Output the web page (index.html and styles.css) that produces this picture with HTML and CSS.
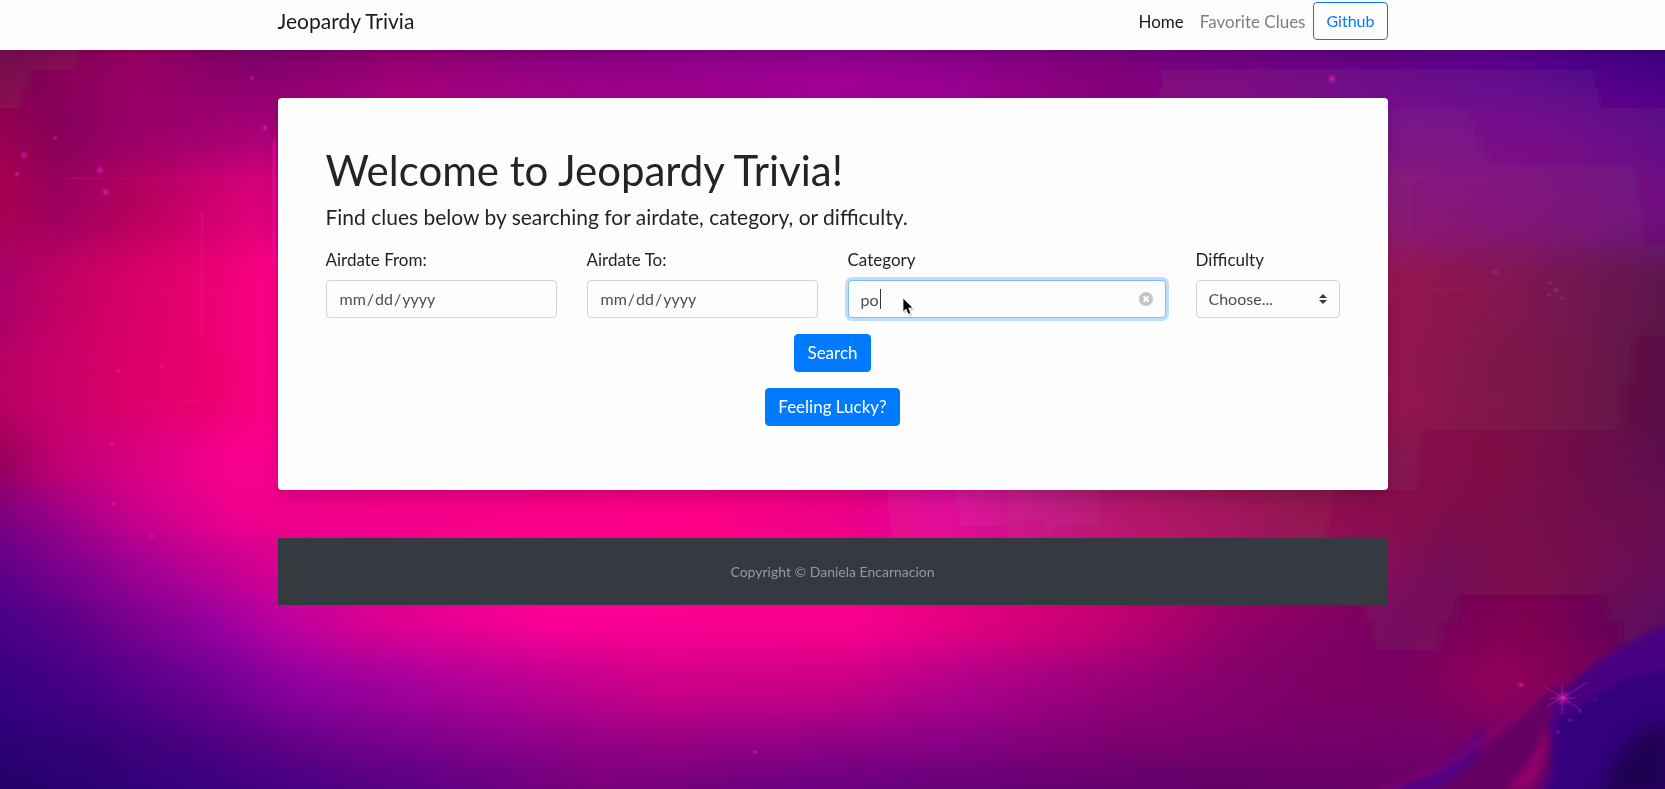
FILE: index.html
```html
<!DOCTYPE html>
<html lang="en">
<head>
<meta charset="utf-8">
<meta name="viewport" content="width=device-width, initial-scale=1">
<title>Jeopardy Trivia</title>
<link rel="stylesheet" href="styles.css">
</head>
<body>
<svg class="backdrop" viewBox="0 50 1665 739" preserveAspectRatio="none" aria-hidden="true">
  <defs>
    <linearGradient id="r1"><stop offset="0" stop-color="#72104a"/><stop offset=".08" stop-color="#960062"/><stop offset=".15" stop-color="#780068"/><stop offset=".24" stop-color="#88006a"/><stop offset=".33" stop-color="#80007c"/><stop offset=".5" stop-color="#85008a"/><stop offset=".63" stop-color="#78007c"/><stop offset=".81" stop-color="#5c0080"/><stop offset=".91" stop-color="#550088"/><stop offset="1" stop-color="#380080"/></linearGradient>
    <linearGradient id="r2"><stop offset="0" stop-color="#7c0850"/><stop offset=".08" stop-color="#980064"/><stop offset=".16" stop-color="#8c0070"/><stop offset=".24" stop-color="#a8007c"/><stop offset=".36" stop-color="#a0008c"/><stop offset=".5" stop-color="#ac009a"/><stop offset=".58" stop-color="#a00094"/><stop offset=".66" stop-color="#8a0074"/><stop offset=".75" stop-color="#801085"/><stop offset=".9" stop-color="#641090"/><stop offset="1" stop-color="#4c0088"/></linearGradient>
    <linearGradient id="r3"><stop offset="0" stop-color="#980050"/><stop offset=".035" stop-color="#850058"/><stop offset=".08" stop-color="#980068"/><stop offset=".16" stop-color="#a80078"/><stop offset=".83" stop-color="#7c1488"/><stop offset=".92" stop-color="#78108a"/><stop offset="1" stop-color="#600c88"/></linearGradient>
    <linearGradient id="r4"><stop offset="0" stop-color="#a80050"/><stop offset=".035" stop-color="#9a0060"/><stop offset=".08" stop-color="#b4005c"/><stop offset=".15" stop-color="#dc0078"/><stop offset=".83" stop-color="#8a1a78"/><stop offset=".92" stop-color="#80187c"/><stop offset="1" stop-color="#701080"/></linearGradient>
    <linearGradient id="r5"><stop offset="0" stop-color="#a80068"/><stop offset=".035" stop-color="#c00064"/><stop offset=".08" stop-color="#d80068"/><stop offset=".12" stop-color="#e80070"/><stop offset=".16" stop-color="#fc0084"/><stop offset=".84" stop-color="#941450"/><stop offset=".9" stop-color="#841450"/><stop offset=".95" stop-color="#701450"/><stop offset="1" stop-color="#5c144c"/></linearGradient>
    <linearGradient id="r6"><stop offset="0" stop-color="#b80064"/><stop offset=".035" stop-color="#c8006a"/><stop offset=".08" stop-color="#dc0068"/><stop offset=".12" stop-color="#e8006c"/><stop offset=".16" stop-color="#fc0084"/><stop offset=".84" stop-color="#941450"/><stop offset=".89" stop-color="#801448"/><stop offset=".94" stop-color="#741448"/><stop offset="1" stop-color="#581044"/></linearGradient>
    <linearGradient id="r7"><stop offset="0" stop-color="#980058"/><stop offset=".035" stop-color="#c00070"/><stop offset=".08" stop-color="#d80080"/><stop offset=".14" stop-color="#f80090"/><stop offset=".5" stop-color="#f80080"/><stop offset=".57" stop-color="#d81898"/><stop offset=".67" stop-color="#a81460"/><stop offset=".84" stop-color="#841450"/><stop offset=".9" stop-color="#800844"/><stop offset="1" stop-color="#5c1050"/></linearGradient>
    <linearGradient id="r8"><stop offset="0" stop-color="#7c0080"/><stop offset=".035" stop-color="#9a0088"/><stop offset=".08" stop-color="#c8008c"/><stop offset=".14" stop-color="#f0008c"/><stop offset=".42" stop-color="#fc0084"/><stop offset=".51" stop-color="#e80088"/><stop offset=".57" stop-color="#e010a0"/><stop offset=".63" stop-color="#c02088"/><stop offset=".69" stop-color="#b01468"/><stop offset=".78" stop-color="#941450"/><stop offset=".87" stop-color="#800848"/><stop offset="1" stop-color="#680850"/></linearGradient>
    <linearGradient id="r9"><stop offset="0" stop-color="#600088"/><stop offset=".035" stop-color="#78008c"/><stop offset=".09" stop-color="#a40094"/><stop offset=".16" stop-color="#d40090"/><stop offset=".3" stop-color="#fc0090"/><stop offset=".5" stop-color="#fc0088"/><stop offset=".83" stop-color="#881058"/><stop offset=".87" stop-color="#700c58"/><stop offset=".91" stop-color="#7c0848"/><stop offset="1" stop-color="#680858"/></linearGradient>
    <linearGradient id="r10"><stop offset="0" stop-color="#480088"/><stop offset=".04" stop-color="#580088"/><stop offset=".08" stop-color="#78008c"/><stop offset=".13" stop-color="#9800a0"/><stop offset=".17" stop-color="#bc00a0"/><stop offset=".22" stop-color="#d80090"/><stop offset=".33" stop-color="#fc0094"/><stop offset=".51" stop-color="#fc0090"/><stop offset=".57" stop-color="#e80080"/><stop offset=".66" stop-color="#c80070"/><stop offset=".75" stop-color="#900068"/><stop offset=".84" stop-color="#740860"/><stop offset=".92" stop-color="#7c0450"/><stop offset="1" stop-color="#580860"/></linearGradient>
    <linearGradient id="r11"><stop offset="0" stop-color="#380080"/><stop offset=".06" stop-color="#4c0088"/><stop offset=".12" stop-color="#6c0090"/><stop offset=".18" stop-color="#9000a0"/><stop offset=".26" stop-color="#ac009c"/><stop offset=".4" stop-color="#d00088"/><stop offset=".5" stop-color="#cc0084"/><stop offset=".58" stop-color="#b0008c"/><stop offset=".67" stop-color="#980078"/><stop offset=".76" stop-color="#800068"/><stop offset=".84" stop-color="#780060"/><stop offset=".9" stop-color="#940058"/><stop offset="1" stop-color="#600058"/></linearGradient>
    <linearGradient id="r12"><stop offset="0" stop-color="#2c0078"/><stop offset=".06" stop-color="#380078"/><stop offset=".12" stop-color="#4c0080"/><stop offset=".2" stop-color="#70008c"/><stop offset=".3" stop-color="#8c008c"/><stop offset=".4" stop-color="#9c0084"/><stop offset=".57" stop-color="#8c0088"/><stop offset=".67" stop-color="#800070"/><stop offset=".84" stop-color="#740068"/><stop offset="1" stop-color="#700060"/></linearGradient>
    <linearGradient id="r13"><stop offset="0" stop-color="#240068"/><stop offset=".08" stop-color="#300078"/><stop offset=".17" stop-color="#440080"/><stop offset=".26" stop-color="#5c0084"/><stop offset=".36" stop-color="#780078"/><stop offset=".48" stop-color="#680080"/><stop offset=".72" stop-color="#600068"/><stop offset=".85" stop-color="#680068"/><stop offset="1" stop-color="#800068"/></linearGradient>
    <filter id="mix" x="0" y="-200" width="1665" height="1200" filterUnits="userSpaceOnUse"><feGaussianBlur stdDeviation="0 20"/></filter>
    <filter id="edge" x="1300" y="560" width="420" height="300" filterUnits="userSpaceOnUse"><feGaussianBlur stdDeviation="3"/></filter>
    <filter id="haze" x="1300" y="560" width="420" height="300" filterUnits="userSpaceOnUse"><feGaussianBlur stdDeviation="10"/></filter>
    <radialGradient id="spark"><stop offset="0" stop-color="#e050c8" stop-opacity=".8"/><stop offset=".3" stop-color="#d818b0" stop-opacity=".5"/><stop offset="1" stop-color="#d818b0" stop-opacity="0"/></radialGradient>
  </defs>
  <g filter="url(#mix)">
    <rect y="-60" width="1665" height="130" fill="url(#r1)"/>
    <rect y="70" width="1665" height="38" fill="url(#r2)"/>
    <rect y="108" width="1665" height="57" fill="url(#r3)"/>
    <rect y="165" width="1665" height="80" fill="url(#r4)"/>
    <rect y="245" width="1665" height="90" fill="url(#r5)"/>
    <rect y="335" width="1665" height="95" fill="url(#r6)"/>
    <rect y="430" width="1665" height="60" fill="url(#r7)"/>
    <rect y="490" width="1665" height="50" fill="url(#r8)"/>
    <rect y="540" width="1665" height="55" fill="url(#r9)"/>
    <rect y="595" width="1665" height="55" fill="url(#r10)"/>
    <rect y="650" width="1665" height="60" fill="url(#r11)"/>
    <rect y="710" width="1665" height="50" fill="url(#r12)"/>
    <rect y="760" width="1665" height="200" fill="url(#r13)"/>
  </g>
  <g fill="none" stroke-linecap="round">
    <path d="M60 178H180M178 178H272M150 290H278M1390 178H1488M1390 290H1465M130 401H270M1400 400H1500" stroke="#e81898" stroke-width="2" opacity=".14"/>
    <path d="M202 213V340" stroke="#ff10a8" stroke-width="3" opacity=".25"/>
    <path d="M274 140V264" stroke="#ff10b8" stroke-width="3" opacity=".5"/>
  </g>
  <g filter="url(#edge)">
    <path d="M1390 800Q1480 765 1546 692Q1590 664 1560 730L1544 800Z" fill="#650064"/>
    <path d="M1380 794Q1440 770 1484 728Q1490 760 1430 794Z" fill="#540080"/>
    <path d="M1380 790Q1475 762 1542 687" fill="none" stroke="#900068" stroke-width="3"/>
    <path d="M1670 624C1625 640 1567 676 1553 708C1542 738 1562 760 1538 800H1670Z" fill="#480080"/>
    <path d="M1670 670C1620 670 1592 700 1560 718C1552 750 1555 780 1545 800H1670Z" fill="#35007c"/>
  </g>
  <path d="M1670 720Q1620 730 1600 800H1670Z" fill="#1c0050" filter="url(#haze)"/>
  <path d="M1530 789Q1550 765 1546 720Q1538 760 1505 789Z" fill="#900068" filter="url(#edge)"/>
  <g stroke="#b028a8" stroke-width="1" opacity=".6">
    <path d="M1545 687L1580 709M1562 684V714M1546 707L1588 682M1550 698H1576"/>
  </g>
  <g fill="url(#spark)">
    <circle cx="24" cy="155" r="5"/><circle cx="17" cy="174" r="4"/><circle cx="100" cy="170" r="5"/><circle cx="106" cy="192" r="5"/><circle cx="252" cy="78" r="3"/><circle cx="265" cy="128" r="4"/><circle cx="55" cy="138" r="3"/><circle cx="118" cy="371" r="3"/><circle cx="162" cy="367" r="3"/><circle cx="1332" cy="79" r="6"/><circle cx="112" cy="444" r="3"/><circle cx="113" cy="504" r="3"/><circle cx="152" cy="536" r="3"/><circle cx="1563" cy="698" r="9"/><circle cx="755" cy="752" r="3"/><circle cx="1521" cy="685" r="4"/>
  </g>
  <g fill="#8850b0" opacity=".3">
    <circle cx="1550" cy="283" r="2"/><circle cx="1556" cy="290" r="3"/><circle cx="1562" cy="298" r="2"/><circle cx="1549" cy="295" r="2"/><circle cx="1495" cy="272" r="3"/><circle cx="1570" cy="720" r="2"/><circle cx="1580" cy="711" r="2"/><circle cx="1558" cy="732" r="2"/><circle cx="1595" cy="700" r="1"/><circle cx="1568" cy="745" r="1"/>
  </g>
</svg>

<header class="navbar">
  <nav class="container navbar-inner" aria-label="Main">
    <a class="brand" href="#">Jeopardy Trivia</a>
    <div class="nav-links">
      <a class="nav-link active" href="#" aria-current="page">Home</a>
      <a class="nav-link" href="#favorites">Favorite Clues</a>
      <a class="btn btn-outline" href="#github">Github</a>
    </div>
  </nav>
</header>

<main class="container">
  <section class="panel">
    <h1>Welcome to Jeopardy Trivia!</h1>
    <p class="lead">Find clues below by searching for airdate, category, or difficulty.</p>
    <form class="search-form">
      <div class="fields">
        <div class="field span-3">
          <label for="from">Airdate From:</label>
          <input class="control" id="from" type="date">
        </div>
        <div class="field span-3">
          <label for="to">Airdate To:</label>
          <input class="control" id="to" type="date">
        </div>
        <div class="field span-4">
          <label for="category">Category</label>
          <div class="category-box">
            <input class="control" id="category" type="text" value="po" autocomplete="off" autofocus>
            <span class="caret"></span>
            <button class="clear" type="button" aria-label="Clear category">
              <svg viewBox="0 0 14 14" width="14" height="14" aria-hidden="true"><circle cx="7" cy="7" r="7" fill="#c4c5c7"/><path d="M4.5 4.5l5 5M9.5 4.5l-5 5" stroke="#fff" stroke-width="2"/></svg>
            </button>
            <svg class="pointer" viewBox="0 0 14 20" width="14" height="20" aria-hidden="true"><path d="M2 3v14l3-3 2 5 3-1-2-5h5z" fill="#999" opacity=".5"/><path d="M1 1v14l3-3 2.200 5.200 2.600-1.100L6.600 11H11z" fill="#000" stroke="#fff" stroke-width=".8"/></svg>
          </div>
        </div>
        <div class="field span-2">
          <label for="difficulty">Difficulty</label>
          <select class="control select" id="difficulty"><option>Choose...</option><option>100</option><option>200</option><option>400</option></select>
        </div>
      </div>
      <button class="btn btn-primary" type="submit">Search</button>
      <button class="btn btn-primary" type="button">Feeling Lucky?</button>
    </form>
  </section>
  <footer class="footer"><small>Copyright © Daniela Encarnacion</small></footer>
</main>
</body>
</html>
```
FILE: styles.css
```css
*, *::before, *::after { box-sizing: border-box; }

body {
  margin: 0;
  min-height: 100vh;
  background: #900070;
  color: #212529;
  font-family: Lato, "Open Sans", sans-serif;
  font-size: 17px;
  line-height: 24px;
}

.backdrop {
  position: fixed;
  top: 50px;
  left: 0;
  z-index: -1;
  width: 100%;
  height: calc(100vh - 50px);
}

.container {
  width: 100%;
  max-width: 1110px;
  margin: 0 auto;
}

.navbar {
  padding: 2px 0 8px;
  background: #fdfdfd;
  box-shadow: 0 2px 16px rgba(0, 0, 0, .15);
}

.navbar-inner,
.nav-links {
  display: flex;
  justify-content: space-between;
}

a { text-decoration: none; }

.brand {
  padding: 4px 0;
  color: #181a1c;
  font-size: 21px;
  line-height: 30px;
}

.nav-link {
  padding: 8px;
  color: #7f7f80;
}

.nav-link.active { color: #181a1c; }

.btn {
  align-self: flex-start;
  padding: 6px 12px;
  border: 1px solid #007bff;
  border-radius: 4px;
  font: inherit;
}

.btn-outline {
  color: #007bff;
  font-size: 16px;
}

.btn-primary {
  align-self: center;
  background: #007bff;
  color: #fff;
}

.panel {
  margin: 48px 0;
  padding: 48px 48px 64px;
  border-radius: 4px;
  background: #fdfdfd;
  box-shadow: 0 8px 16px rgba(0, 0, 0, .15);
}

h1 {
  margin: 0 0 8px;
  font-size: 42px;
  font-weight: 400;
  line-height: 48px;
}

.lead {
  margin: 0 0 16px;
  font-size: 21px;
  line-height: 30px;
}

.search-form {
  display: flex;
  flex-direction: column;
  gap: 16px;
}

.fields {
  display: grid;
  grid-template-columns: repeat(12, minmax(0, 1fr));
  column-gap: 30px;
}

.field {
  display: flex;
  flex-direction: column;
  gap: 8px;
}

.span-2 { grid-column: span 2; }
.span-3 { grid-column: span 3; }
.span-4 { grid-column: span 4; }

.control {
  display: block;
  width: 100%;
  height: 38px;
  padding: 6px 12px;
  border: 1px solid #ced4da;
  border-radius: 4px;
  background: #fdfdfd;
  color: #495057;
  caret-color: transparent;
  font: inherit;
  font-size: 16px;
}

.control:focus {
  border-color: #80bdff;
  outline: 0;
  box-shadow: 0 0 0 3px #c0dcff;
}

.control::-webkit-calendar-picker-indicator { display: none; }

.category-box { position: relative; }

.caret {
  position: absolute;
  top: 9px;
  left: 32px;
  width: 1px;
  height: 20px;
  background: #343a40;
}

.clear {
  position: absolute;
  top: 12px;
  right: 13px;
  display: flex;
  padding: 0;
  border: 0;
  background: none;
}

.pointer {
  position: absolute;
  top: 17px;
  left: 54px;
}

.select {
  appearance: none;
  background: #fdfdfd url("data:image/svg+xml,%3Csvg xmlns='http://www.w3.org/2000/svg' viewBox='0 0 4 5'%3E%3Cpath fill='%23343a40' d='M2 0L0 2h4zm0 5L0 3h4z'/%3E%3C/svg%3E") no-repeat right 12px center / 8px 10px;
}

.footer {
  padding: 24px;
  background: #343a40;
  color: #98999b;
  text-align: center;
}

.footer small {
  display: block;
  font-size: 14px;
  line-height: 19px;
}
```
